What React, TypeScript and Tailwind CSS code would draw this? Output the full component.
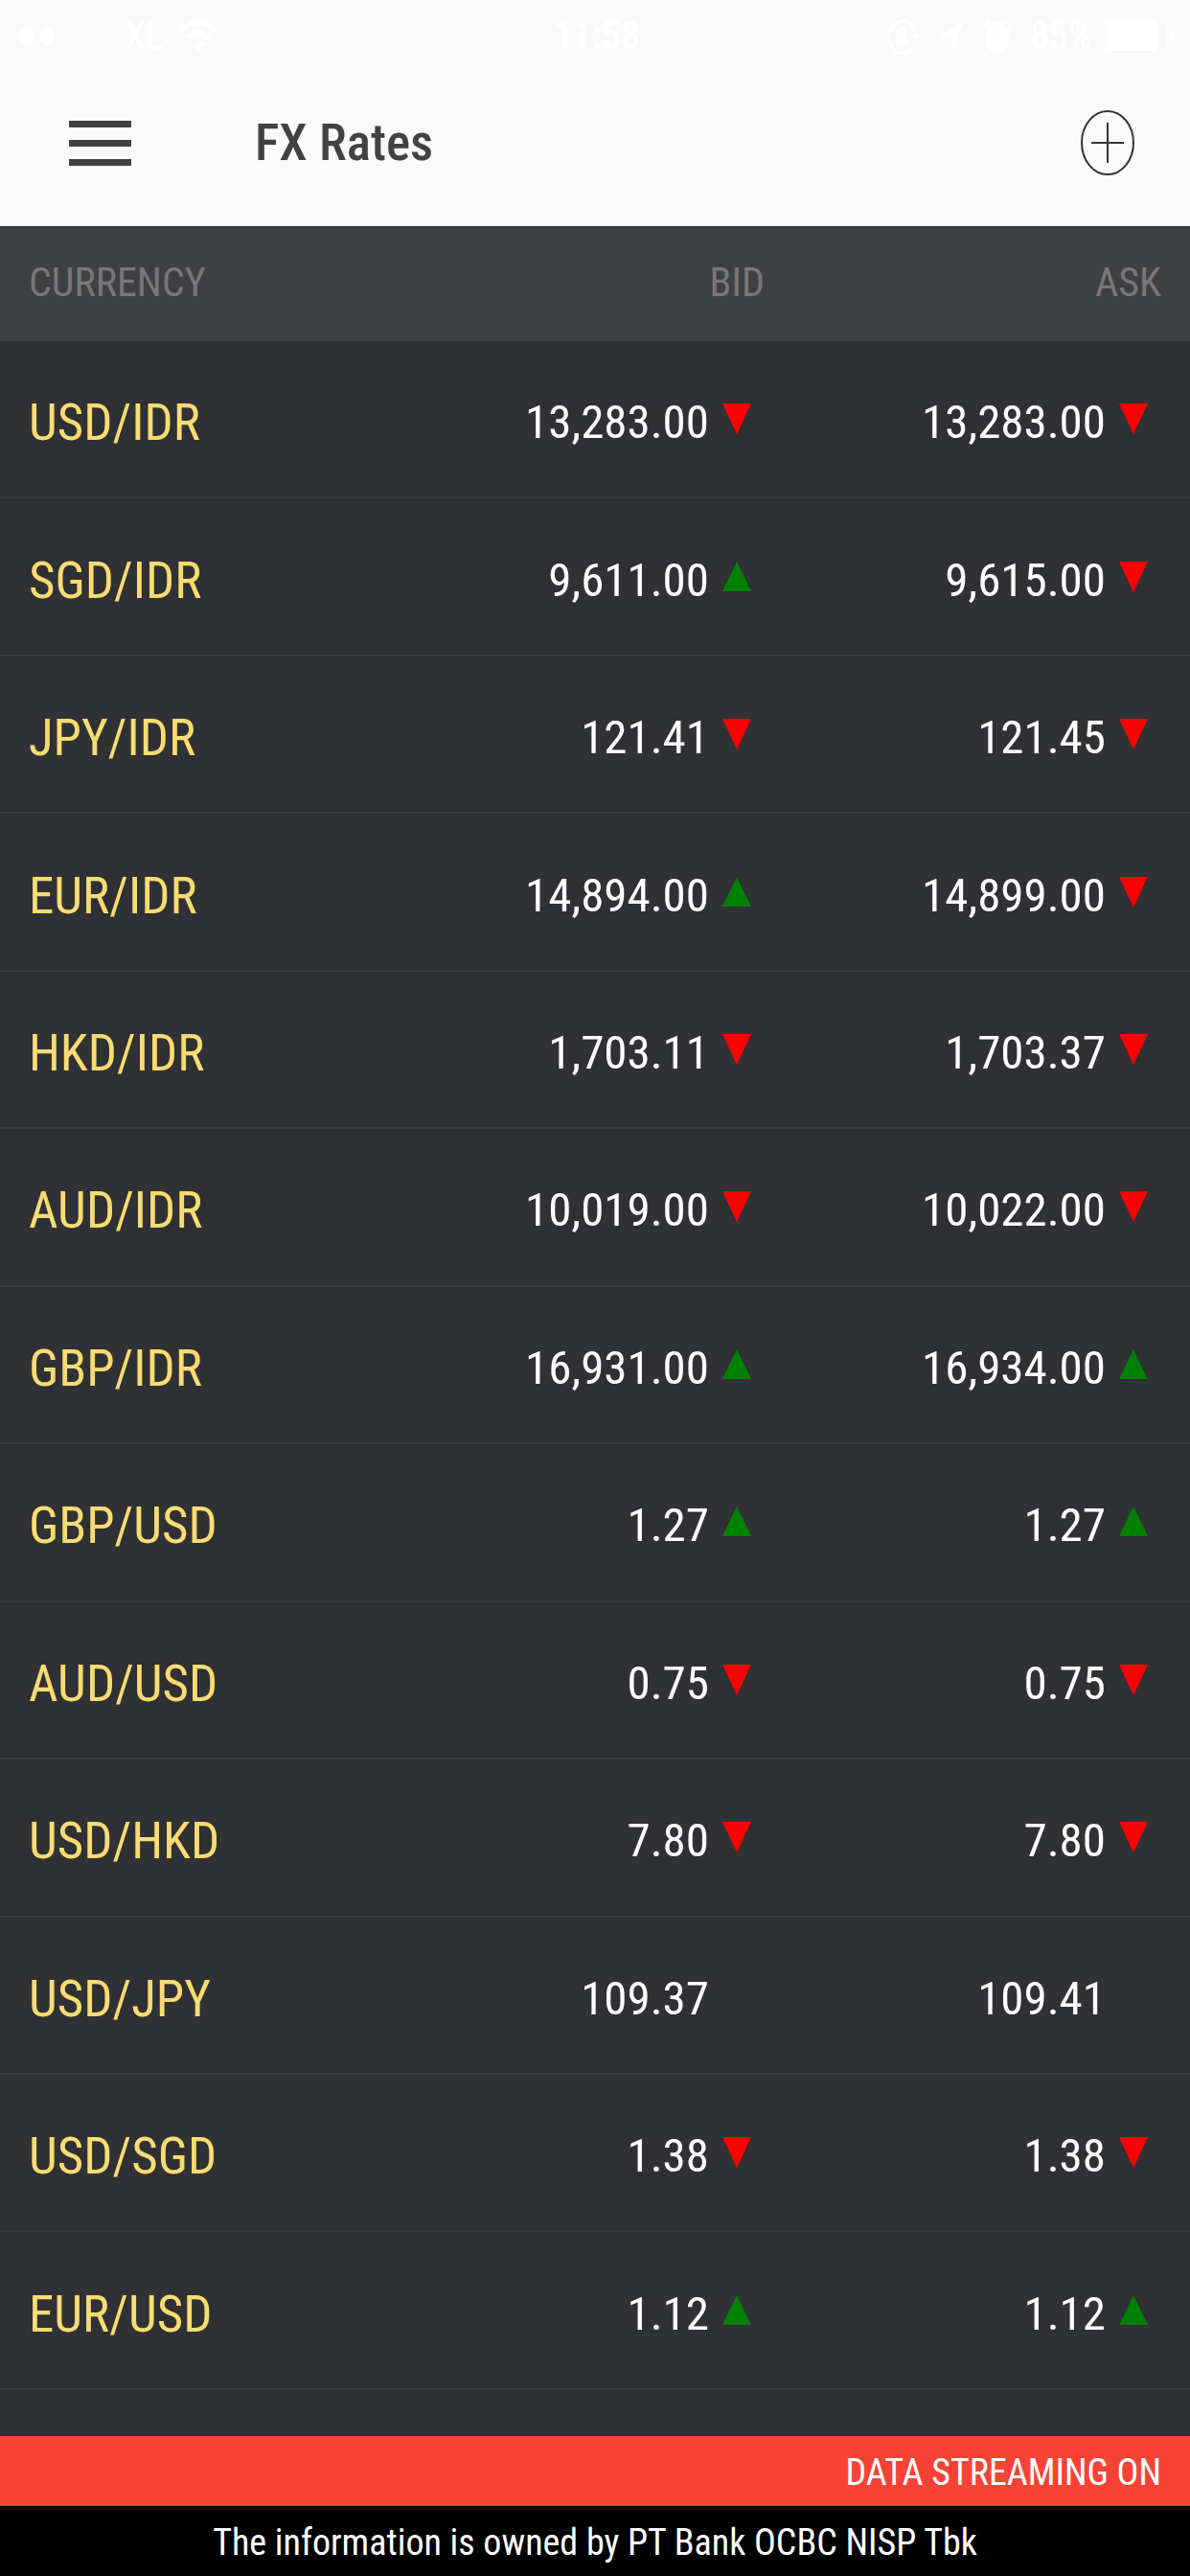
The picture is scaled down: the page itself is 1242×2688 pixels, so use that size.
type Trend = 'up' | 'down' | null

interface Quote {
  value: string
  trend: Trend
}

interface Rate {
  pair: string
  bid: Quote
  ask: Quote
}

const RATES: Rate[] = [
  { pair: 'USD/IDR', bid: { value: '13,283.00', trend: 'down' }, ask: { value: '13,283.00', trend: 'down' } },
  { pair: 'SGD/IDR', bid: { value: '9,611.00', trend: 'up' }, ask: { value: '9,615.00', trend: 'down' } },
  { pair: 'JPY/IDR', bid: { value: '121.41', trend: 'down' }, ask: { value: '121.45', trend: 'down' } },
  { pair: 'EUR/IDR', bid: { value: '14,894.00', trend: 'up' }, ask: { value: '14,899.00', trend: 'down' } },
  { pair: 'HKD/IDR', bid: { value: '1,703.11', trend: 'down' }, ask: { value: '1,703.37', trend: 'down' } },
  { pair: 'AUD/IDR', bid: { value: '10,019.00', trend: 'down' }, ask: { value: '10,022.00', trend: 'down' } },
  { pair: 'GBP/IDR', bid: { value: '16,931.00', trend: 'up' }, ask: { value: '16,934.00', trend: 'up' } },
  { pair: 'GBP/USD', bid: { value: '1.27', trend: 'up' }, ask: { value: '1.27', trend: 'up' } },
  { pair: 'AUD/USD', bid: { value: '0.75', trend: 'down' }, ask: { value: '0.75', trend: 'down' } },
  { pair: 'USD/HKD', bid: { value: '7.80', trend: 'down' }, ask: { value: '7.80', trend: 'down' } },
  { pair: 'USD/JPY', bid: { value: '109.37', trend: null }, ask: { value: '109.41', trend: null } },
  { pair: 'USD/SGD', bid: { value: '1.38', trend: 'down' }, ask: { value: '1.38', trend: 'down' } },
  { pair: 'EUR/USD', bid: { value: '1.12', trend: 'up' }, ask: { value: '1.12', trend: 'up' } },
]

function TrendArrow({ trend }: { trend: Trend }) {
  return (
    <svg viewBox="0 0 30 32" className="w-[30px] h-8 shrink-0" aria-hidden="true">
      {trend === 'down' && <path d="M0 0H30L15 32Z" fill="#ff0000" />}
      {trend === 'up' && <path d="M0 31H30L15 0Z" fill="#008000" />}
    </svg>
  )
}

function QuoteCell({ quote }: { quote: Quote }) {
  return (
    <td className="border-b-2 border-[#3a3b3f] pr-[44px] py-0">
      <div className="flex items-center justify-end gap-[14px]">
        <span className="pt-2">{quote.value}</span>
        <TrendArrow trend={quote.trend} />
      </div>
    </td>
  )
}

function StatusBar() {
  return (
    <div className="grid grid-cols-3 items-center h-[76px] pl-5 pr-4 text-white text-[40px] leading-none">
      <div className="flex items-center">
        <svg viewBox="0 0 102 22" className="w-[102px] h-[22px]" aria-hidden="true">
          <ellipse cx="8" cy="11" rx="8" ry="10" fill="currentColor" />
          <ellipse cx="29" cy="11" rx="8" ry="10" fill="currentColor" />
          <ellipse cx="50" cy="11" rx="7" ry="9" fill="none" stroke="currentColor" strokeWidth="1" />
          <ellipse cx="71" cy="11" rx="7" ry="9" fill="none" stroke="currentColor" strokeWidth="1" />
          <ellipse cx="92" cy="11" rx="7" ry="9" fill="none" stroke="currentColor" strokeWidth="1" />
        </svg>
        <span className="ml-2">XL</span>
        <svg viewBox="0 0 40 36" className="w-10 h-9 ml-4" fill="none" stroke="currentColor" strokeWidth="5" aria-hidden="true">
          <path d="M2 12Q20 -6 38 12M9 20Q20 8 31 20" />
          <path d="M20 34L13 26Q20 19 27 26Z" fill="currentColor" stroke="none" />
        </svg>
      </div>
      <div className="text-center font-medium">11:58</div>
      <div className="flex items-center justify-end">
        <svg viewBox="0 0 38 38" className="w-[38px] h-[38px] mr-4" fill="none" stroke="currentColor" strokeWidth="2" aria-hidden="true">
          <path d="M29 29A14 17 0 1 1 31 17" />
          <path d="M26 17H36L31 24Z" fill="currentColor" stroke="none" />
          <path d="M11 18H22V28H11Z" fill="currentColor" stroke="none" />
          <path d="M13 18V13Q16 8 20 13V18" />
        </svg>
        <svg viewBox="0 0 28 32" className="w-7 h-8 mr-5" aria-hidden="true">
          <path d="M27 0L15 32V16H0Z" fill="currentColor" />
        </svg>
        <svg viewBox="0 0 28 34" className="w-7 h-[34px] mr-5" aria-hidden="true">
          <ellipse cx="14" cy="18" rx="13" ry="16" fill="currentColor" />
          <path d="M0 6L6 0M28 6L22 0" stroke="currentColor" strokeWidth="3" />
          <path d="M14 8V20H8" fill="none" stroke="#fafafa" strokeWidth="2" />
        </svg>
        <span className="mr-3">85%</span>
        <svg viewBox="0 0 74 38" className="w-[74px] h-[38px]" aria-hidden="true">
          <rect x="1" y="1" width="65" height="36" rx="3" fill="none" stroke="currentColor" strokeWidth="1" />
          <rect x="3" y="3" width="53" height="31" fill="currentColor" />
          <rect x="69" y="13" width="4" height="11" rx="2" fill="currentColor" />
        </svg>
      </div>
    </div>
  )
}

export default function App() {
  return (
    <div className="min-h-screen flex flex-col bg-[#303135] text-white font-['Roboto_Condensed','Roboto',sans-serif]">
      <header className="bg-[#fafafa] border-b-2 border-[#27325a]">
        <StatusBar />
        <div className="flex items-center h-40 pb-[14px] pl-[72px] pr-[57px] text-[#424242]">
          <button type="button" aria-label="Menu" className="flex flex-col gap-[13px]">
            <span className="block w-[65px] h-[7px] bg-[#424242]" />
            <span className="block w-[65px] h-[7px] bg-[#424242]" />
            <span className="block w-[65px] h-[7px] bg-[#424242]" />
          </button>
          <h1 className="flex-1 ml-[129px] text-[53px] leading-none font-medium">FX Rates</h1>
          <button type="button" aria-label="Add currency">
            <svg viewBox="0 0 58 70" className="w-[58px] h-[70px]" fill="none" stroke="#333333" strokeWidth="2" aria-hidden="true">
              <ellipse cx="29" cy="35" rx="27" ry="33" />
              <path d="M12 35H46M29 14V56" />
            </svg>
          </button>
        </div>
      </header>

      <main className="flex-1 flex pb-12">
        <table className="w-full table-fixed border-separate border-spacing-0">
          <thead>
            <tr className="h-[118px] bg-[#3f4044] text-[#77777a] text-[42px] leading-none">
              <th scope="col" className="px-[30px] pt-0 pb-1 text-left font-normal">CURRENCY</th>
              <th scope="col" className="px-[30px] pt-0 pb-1 text-right font-normal">BID</th>
              <th scope="col" className="px-[30px] pt-0 pb-1 text-right font-normal">ASK</th>
            </tr>
          </thead>
          <tbody className="text-[49px] leading-[56px]">
            {RATES.map(rate => (
              <tr key={rate.pair}>
                <th scope="row" className="border-b-2 border-[#3a3b3f] pl-[30px] pt-14 pb-12 text-left font-normal text-[53px] text-[#f8dc72]">
                  {rate.pair}
                </th>
                <QuoteCell quote={rate.bid} />
                <QuoteCell quote={rate.ask} />
              </tr>
            ))}
          </tbody>
        </table>
      </main>

      <footer className="text-[38px] leading-[69px]">
        <p className="bg-[#f64336] pt-1 px-[30px] text-right">DATA STREAMING ON</p>
        <p className="bg-black pt-1 text-center">The information is owned by PT Bank OCBC NISP Tbk</p>
      </footer>
    </div>
  )
}
